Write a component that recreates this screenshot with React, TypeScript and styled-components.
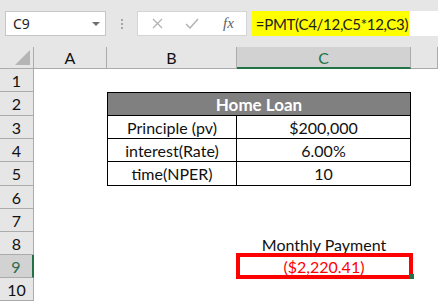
import React from "react";
import styled, { createGlobalStyle } from "styled-components";

const Global = createGlobalStyle`
  html, body { margin: 0; padding: 0; background: #ffffff; }
  body { font-family: Lato, "Liberation Sans", Arial, sans-serif; overflow: hidden; }
`;

const Page = styled.div`
  width: 438px;
  height: 302px;
  overflow: hidden;
  background: #ffffff;
  display: flex;
  flex-direction: column;
`;

const Toolbar = styled.div`
  height: 47px;
  background: #e6e6e6;
  display: flex;
  align-items: flex-start;
  padding: 11px 0 0 5px;
  box-sizing: border-box;
`;

const NameBox = styled.div`
  width: 101px;
  height: 25px;
  box-sizing: border-box;
  background: #fff;
  border: 1px solid #c6c6c6;
  display: flex;
  align-items: center;
  justify-content: space-between;
  padding: 0 5px 0 7px;
  font-family: "Noto Sans", sans-serif;
  font-size: 14px;
  color: #222;
`;

const Caret = styled.span`
  width: 0;
  height: 0;
  border-left: 4px solid transparent;
  border-right: 4px solid transparent;
  border-top: 4px solid #6e6e6e;
`;

const Grip = styled.div`
  width: 31px;
  height: 25px;
  display: flex;
  flex-direction: column;
  align-items: center;
  justify-content: center;
  gap: 2px;
  span {
    width: 2px;
    height: 2px;
    background: #a6a6a6;
  }
`;

const FxBox = styled.div`
  width: 110px;
  height: 25px;
  box-sizing: border-box;
  background: #fff;
  border: 1px solid #d4d4d4;
  display: flex;
  align-items: center;
  padding-left: 14px;
  gap: 22px;
`;

const Fx = styled.span`
  font-family: "Liberation Serif", serif;
  font-style: italic;
  font-size: 15px;
  color: #5f5f5f;
  margin-left: 2px;
`;

const FormulaInput = styled.div`
  flex: 1;
  height: 25px;
  margin-left: 5px;
  background: #fff;
  display: flex;
`;

const FormulaHighlight = styled.div`
  width: 157px;
  height: 25px;
  background: #ffff00;
  display: flex;
  align-items: center;
  justify-content: center;
  font-size: 15px;
  letter-spacing: -0.3px;
  color: #222;
  padding-left: 3px;
  box-sizing: border-box;
`;

const Sheet = styled.div`
  display: grid;
  grid-template-columns: 34px 73px 130px 174px 1fr;
  grid-template-rows: 22px 23px 24px 23px 23px 24px 23px 23px 23px 23px 23px;
  font-size: 16px;
`;

const ColHeader = styled.div<{ $active?: boolean }>`
  background: ${(p) => (p.$active ? "#d2d2d2" : "#e6e6e6")};
  border-right: 1px solid #ababab;
  border-bottom: ${(p) => (p.$active ? "2px solid #217346" : "1px solid #ababab")};
  box-sizing: border-box;
  display: flex;
  align-items: center;
  justify-content: center;
  color: ${(p) => (p.$active ? "#217346" : "#111")};
  position: relative;
`;

const Triangle = styled.span`
  position: absolute;
  right: 3px;
  bottom: 3px;
  width: 0;
  height: 0;
  border-left: 15px solid transparent;
  border-bottom: 15px solid #b5b5b5;
`;

const RowHeader = styled.div<{ $active?: boolean }>`
  background: ${(p) => (p.$active ? "#d2d2d2" : "#e6e6e6")};
  border-right: ${(p) => (p.$active ? "2px solid #217346" : "1px solid #ababab")};
  border-bottom: 1px solid #ababab;
  box-sizing: border-box;
  display: flex;
  align-items: center;
  justify-content: center;
  color: ${(p) => (p.$active ? "#2f6b4f" : "#111")};
`;

const Cell = styled.div<{ $span?: number }>`
  grid-column: span ${(p) => p.$span ?? 1};
  background: #fff;
`;

const TableCell = styled.div<{ $head?: boolean; $first?: boolean; $top?: boolean; $span?: number }>`
  grid-column: span ${(p) => p.$span ?? 1};
  box-sizing: border-box;
  border-right: 1px solid #000;
  border-bottom: 1px solid #000;
  border-left: ${(p) => (p.$first ? "1px solid #000" : "none")};
  border-top: ${(p) => (p.$top ? "1px solid #000" : "none")};
  background: ${(p) => (p.$head ? "#808080" : "#fff")};
  color: ${(p) => (p.$head ? "#fff" : "#111")};
  font-weight: ${(p) => (p.$head ? 700 : 400)};
  font-size: ${(p) => (p.$head ? "17px" : "16px")};
  display: flex;
  align-items: center;
  justify-content: center;
`;

const LabelCell = styled.div`
  display: flex;
  align-items: flex-end;
  justify-content: center;
  padding-bottom: 1px;
  color: #111;
`;

const ResultCell = styled.div`
  position: relative;
  display: flex;
  align-items: center;
  justify-content: center;
  color: #ff0000;
`;

const RedFrame = styled.span`
  position: absolute;
  left: -1px;
  right: -2px;
  top: -2px;
  bottom: -1px;
  border: 4px solid #ff0000;
`;

const FillHandle = styled.span`
  position: absolute;
  right: -3px;
  bottom: -1px;
  width: 5px;
  height: 5px;
  background: #217346;
`;

const rows = Array.from({ length: 10 }, (_, i) => i + 1);

const data: Record<number, [string, string]> = {
  3: ["Principle (pv)", "$200,000"],
  4: ["interest(Rate)", "6.00%"],
  5: ["time(NPER)", "10"],
};

export default function App() {
  const renderRow = (r: number) => {
    const head = <RowHeader key={`h${r}`} $active={r === 9}>{r}</RowHeader>;
    if (r === 2) {
      return [
        head,
        <Cell key="a2" />,
        <TableCell key="b2" $head $first $top $span={2}>Home Loan</TableCell>,
        <Cell key="d2" />,
      ];
    }
    if (r >= 3 && r <= 5) {
      return [
        head,
        <Cell key={`a${r}`} />,
        <TableCell key={`b${r}`} $first>{data[r][0]}</TableCell>,
        <TableCell key={`c${r}`}>{data[r][1]}</TableCell>,
        <Cell key={`d${r}`} />,
      ];
    }
    if (r === 8) {
      return [
        head,
        <Cell key="a8" />,
        <Cell key="b8" />,
        <LabelCell key="c8">Monthly Payment</LabelCell>,
        <Cell key="d8" />,
      ];
    }
    if (r === 9) {
      return [
        head,
        <Cell key="a9" />,
        <Cell key="b9" />,
        <ResultCell key="c9">
          ($2,220.41)
          <RedFrame />
          <FillHandle />
        </ResultCell>,
        <Cell key="d9" />,
      ];
    }
    return [head, <Cell key={`x${r}`} $span={4} />];
  };

  return (
    <Page>
      <Global />
      <Toolbar>
        <NameBox>
          <span>C9</span>
          <Caret />
        </NameBox>
        <Grip>
          <span />
          <span />
          <span />
        </Grip>
        <FxBox>
          <svg width="11" height="11" viewBox="0 0 11 11">
            <path d="M1 1 L10 10 M10 1 L1 10" stroke="#b3b3b3" strokeWidth="1.3" fill="none" />
          </svg>
          <svg width="14" height="11" viewBox="0 0 14 11">
            <path d="M1 6 L5 10 L13 1" stroke="#b3b3b3" strokeWidth="1.5" fill="none" />
          </svg>
          <Fx>fx</Fx>
        </FxBox>
        <FormulaInput>
          <FormulaHighlight>=PMT(C4/12,C5*12,C3)</FormulaHighlight>
        </FormulaInput>
      </Toolbar>
      <Sheet>
        <ColHeader>
          <Triangle />
        </ColHeader>
        <ColHeader>A</ColHeader>
        <ColHeader>B</ColHeader>
        <ColHeader $active>C</ColHeader>
        <ColHeader />
        {rows.map((r) => renderRow(r))}
      </Sheet>
    </Page>
  );
}
